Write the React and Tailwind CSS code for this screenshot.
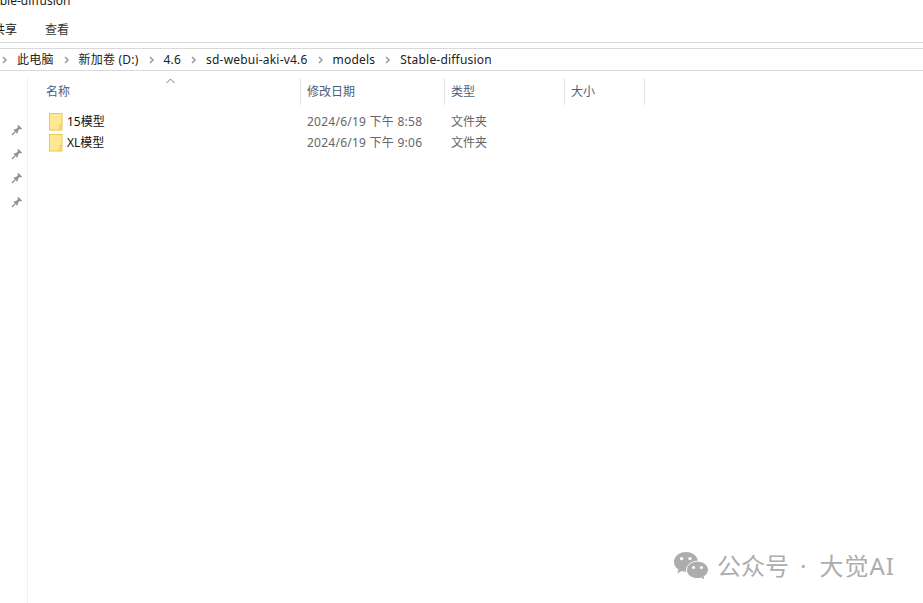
import React from 'react';

const font = { fontFamily: '"Noto Sans", "Noto Sans CJK SC", sans-serif' };

const crumbs = ['此电脑', '新加卷 (D:)', '4.6', 'sd-webui-aki-v4.6', 'models', 'Stable-diffusion'];

const columns = [
  { label: '修改日期', width: 'w-[144px]' },
  { label: '类型', width: 'w-[120px]' },
  { label: '大小', width: 'w-[80px]' },
];

const rows = [
  { name: '15模型', date: '2024/6/19 下午 8:58' },
  { name: 'XL模型', date: '2024/6/19 下午 9:06' },
];

function Chevron() {
  return (
    <svg width="7" height="8" viewBox="0 0 7 8" className="shrink-0">
      <path d="M2 1 L5 4 L2 7" fill="none" stroke="#9a9a9a" strokeWidth="1.5" />
    </svg>
  );
}

function Pin() {
  return (
    <svg width="12" height="12" viewBox="0 0 12 12">
      <path d="M7.2 0.8 L11.2 4.8 L10 5.4 L8.8 5 L7 7 L6.8 9 L5.8 9.6 L2.6 6.2 L3.2 5.2 L5 5 L7 3.2 L6.6 2 Z" fill="#8f979f" />
      <path d="M4 8 L1 11" stroke="#8f979f" strokeWidth="1.4" />
    </svg>
  );
}

function Folder() {
  return (
    <svg width="14" height="18" viewBox="0 0 14 18" className="shrink-0">
      <rect x="0.5" y="0.5" width="12.5" height="16.5" fill="#ffe793" stroke="#e9c850" />
      <path d="M13 11.5 L11 11.5 L11 17" fill="none" stroke="#e9c850" />
    </svg>
  );
}

function WeChat() {
  return (
    <svg width="36" height="30" viewBox="0 0 36 30">
      <path d="M13 1 C6 1 1 5.5 1 11 C1 14.2 2.7 16.8 5.4 18.6 L4.4 22.4 L8.6 20 C10 20.5 11.4 20.7 13 20.7 C20 20.7 25 16.2 25 11 C25 5.5 20 1 13 1 Z" fill="#adadad" />
      <path d="M24.5 10.2 C18.3 10.2 13.5 14.2 13.5 19 C13.5 23.8 18.3 27.6 24.5 27.6 C25.8 27.6 27 27.4 28.2 27 L31.8 29.4 L31 25.6 C33.6 24 35.4 21.6 35.4 19 C35.4 14.2 30.6 10.2 24.5 10.2 Z" fill="#adadad" stroke="#fff" strokeWidth="1" />
      <circle cx="8.6" cy="7.6" r="1.7" fill="#fff" />
      <circle cx="17" cy="7.6" r="1.7" fill="#fff" />
      <circle cx="20.6" cy="16.6" r="1.5" fill="#fff" />
      <circle cx="28.4" cy="16.6" r="1.5" fill="#fff" />
    </svg>
  );
}

export default function App() {
  return (
    <div className="relative h-[603px] w-[923px] overflow-hidden bg-white text-[12px] text-[#1a1a1a]" style={font}>
      {/* title bar, cut off by the top of the picture */}
      <div className="h-[20px] overflow-hidden">
        <div className="-mt-[7px] -ml-[18px] leading-[16px]">Stable-diffusion</div>
      </div>

      {/* ribbon tabs */}
      <div className="flex h-[22px] items-center overflow-hidden pb-[2px] leading-[18px]">
        <span className="-ml-[7px] w-[52px] shrink-0">共享</span>
        <span className="text-[#333]">查看</span>
      </div>

      <div className="h-[1px] bg-[#d9d9d9]" />
      <div className="h-[5px]" />

      {/* address bar */}
      <div className="flex h-[23px] items-center gap-[9px] border-y border-[#d9d9d9] pl-[1px]">
        {crumbs.map((crumb) => (
          <React.Fragment key={crumb}>
            <Chevron />
            <span className="whitespace-nowrap leading-[16px] tracking-[0.2px] text-[#222]">{crumb}</span>
          </React.Fragment>
        ))}
      </div>

      <div className="flex">
        {/* quick access pins */}
        <div className="mt-[7px] flex h-[525px] w-[28px] shrink-0 flex-col items-center border-r border-[#f0f0f0] pl-[7px] pt-[40px]">
          {[0, 1, 2, 3].map((i) => (
            <div key={i} className="flex h-[24px] items-center justify-center">
              <Pin />
            </div>
          ))}
        </div>

        {/* file list */}
        <div className="relative flex-1">
          <div className="absolute left-[138px] top-[7px] text-[#777]">
            <svg width="9" height="6" viewBox="0 0 9 6">
              <path d="M0.5 5 L4.5 1 L8.5 5" fill="none" stroke="#7a7a7a" strokeWidth="1" />
            </svg>
          </div>

          <div className="mt-[7px] flex h-[27px] text-[#4c607a]">
            <div className="flex w-[272px] items-center pl-[18px]">名称</div>
            {columns.map((col) => (
              <div key={col.label} className={`flex items-center border-l border-[#e5e5e5] pl-[6px] ${col.width}`}>
                {col.label}
              </div>
            ))}
            <div className="border-l border-[#e5e5e5]" />
          </div>

          <div className="mt-[6px]">
            {rows.map((row) => (
              <div key={row.name} className="flex h-[21px] items-center">
                <div className="flex w-[273px] items-center gap-[4px] pl-[21px]">
                  <Folder />
                  <span className="text-[#111]">{row.name}</span>
                </div>
                <div className="w-[144px] pl-[6px] tracking-[0.25px] text-[#666]">{row.date}</div>
                <div className="pl-[6px] text-[#666]">文件夹</div>
              </div>
            ))}
          </div>
        </div>
      </div>

      {/* watermark */}
      <div className="absolute left-[673px] top-[551px] flex items-center text-[#adadad]">
        <WeChat />
        <span className="ml-[8px] whitespace-nowrap text-[24px] leading-[30px]">公众号</span>
        <span className="ml-[11px] whitespace-nowrap text-[24px] leading-[30px]">·</span>
        <span className="ml-[13px] whitespace-nowrap text-[24px] leading-[30px] tracking-[1px]">大觉AI</span>
      </div>
    </div>
  );
}
